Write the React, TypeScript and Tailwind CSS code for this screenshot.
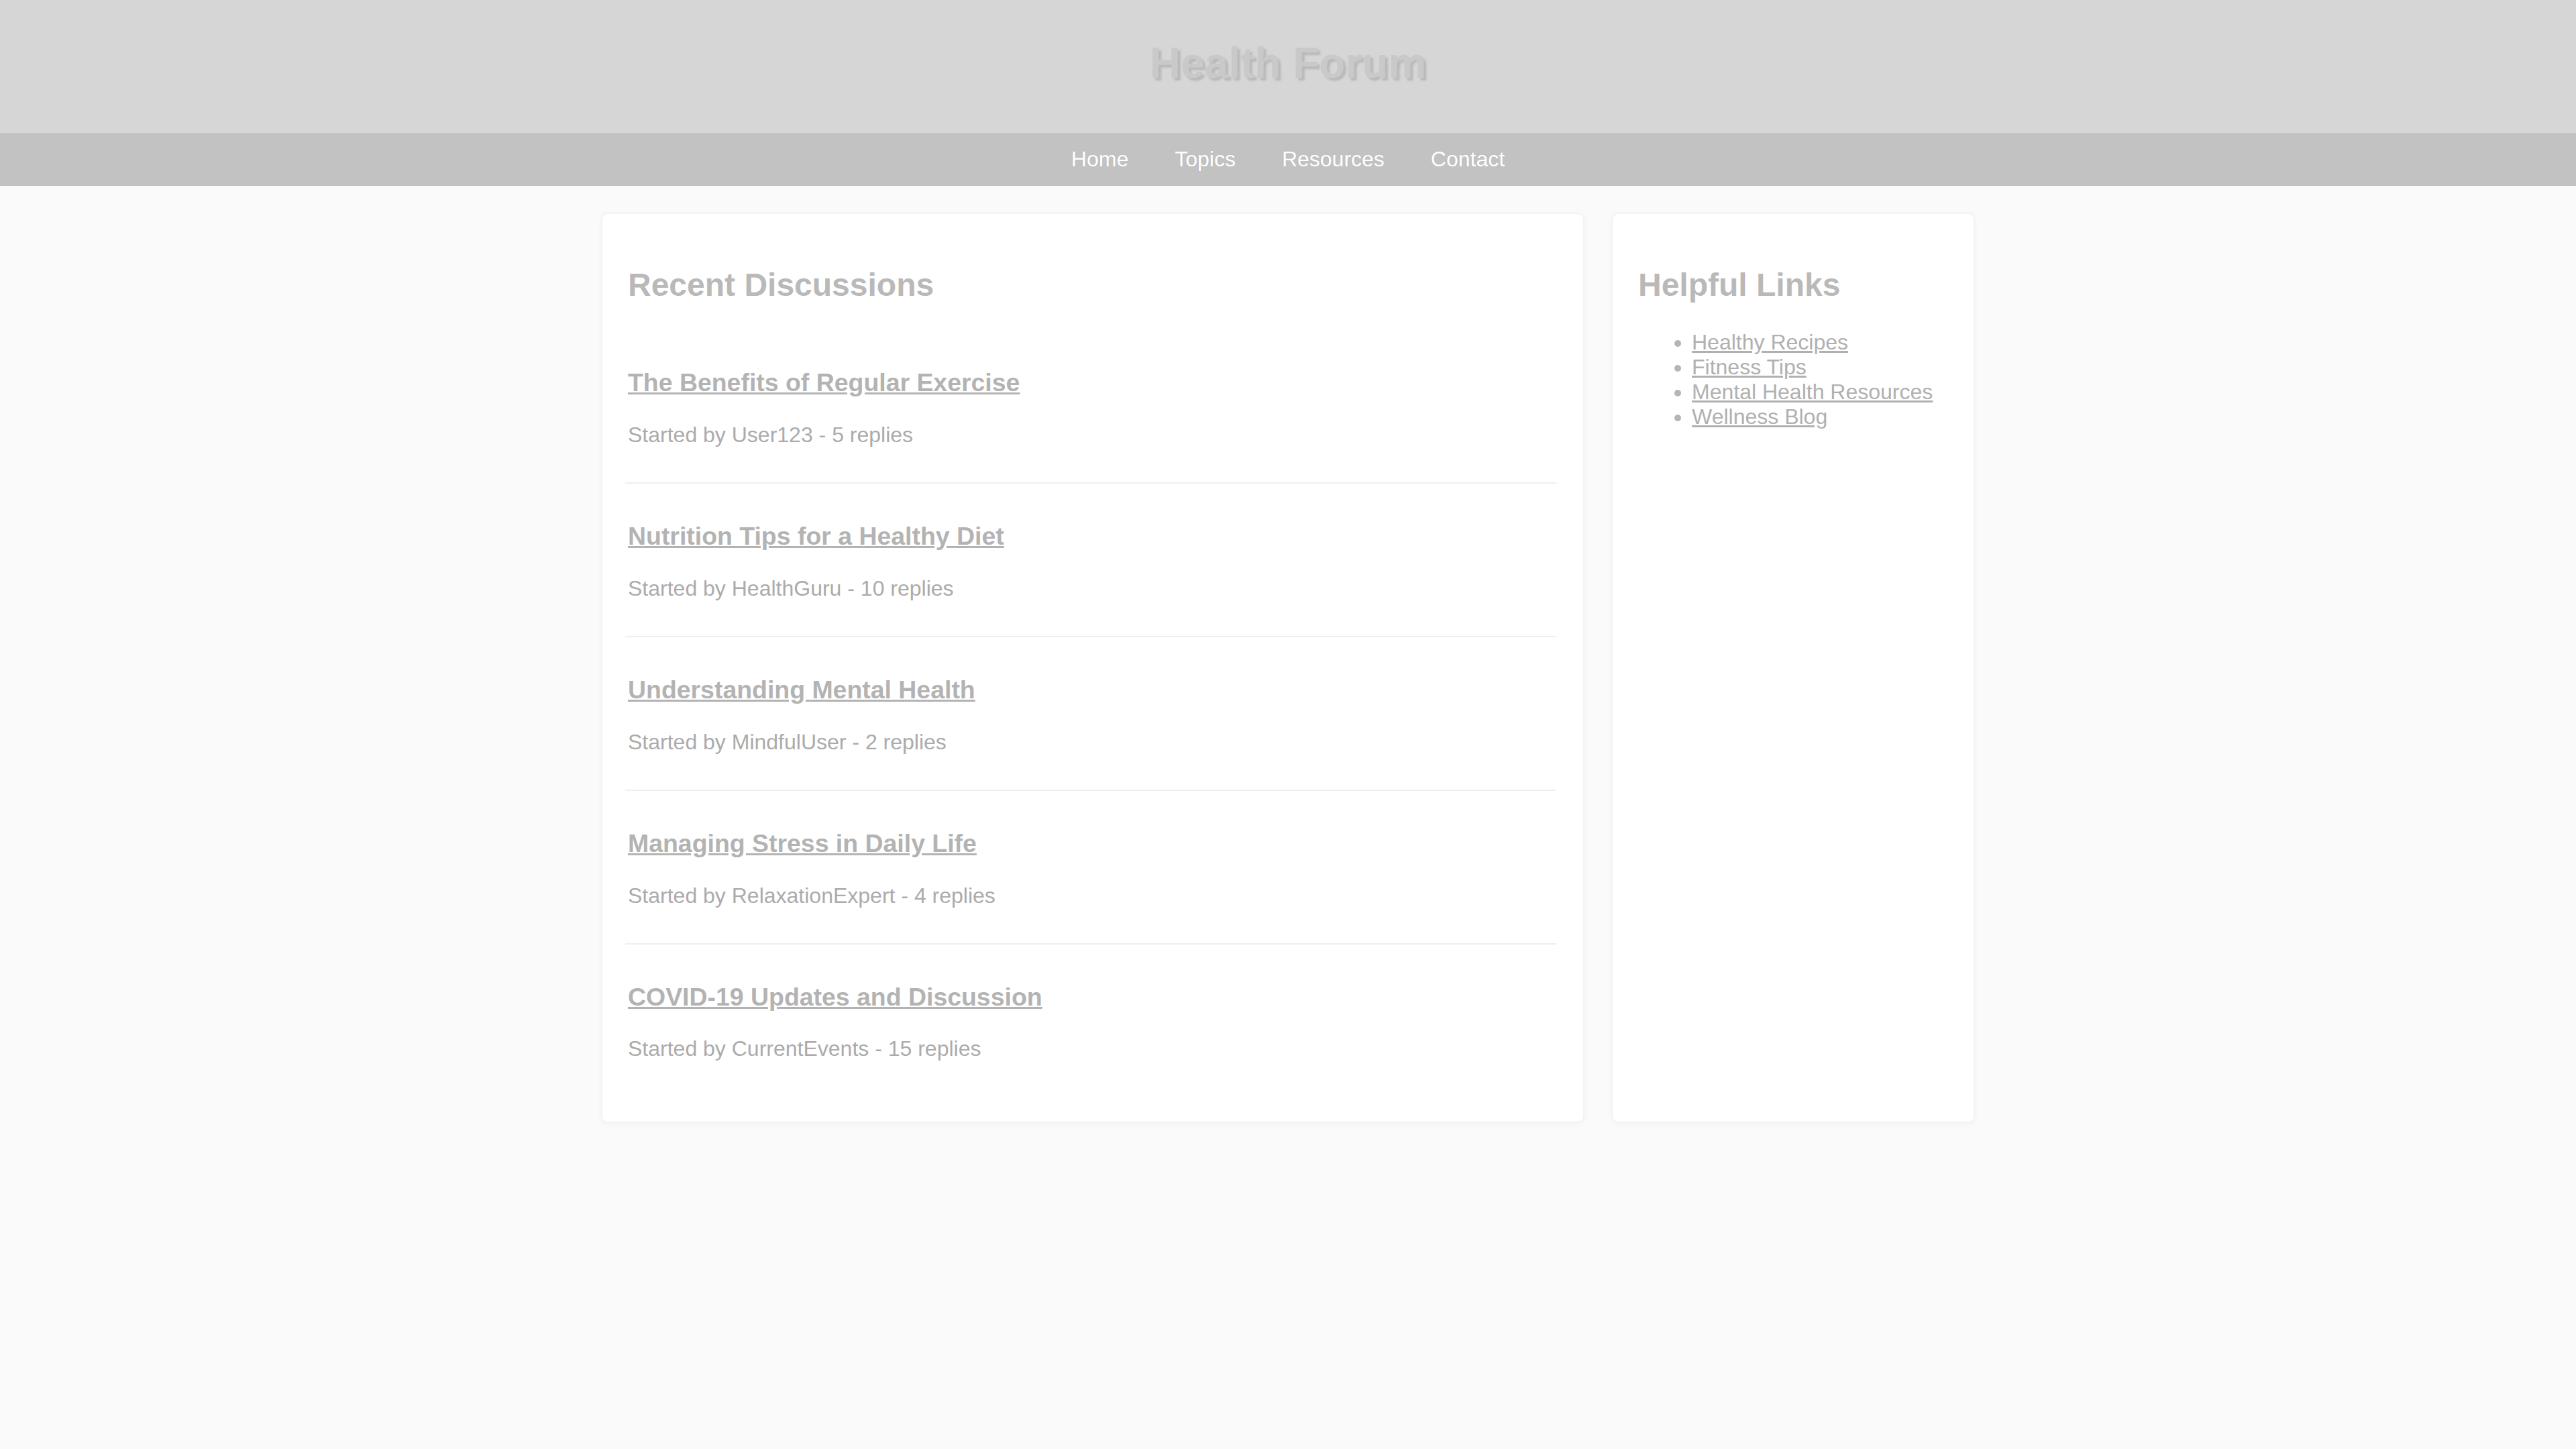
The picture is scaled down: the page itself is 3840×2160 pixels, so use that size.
import React from "react";

const discussions = [
  { title: "The Benefits of Regular Exercise", meta: "Started by User123 - 5 replies" },
  { title: "Nutrition Tips for a Healthy Diet", meta: "Started by HealthGuru - 10 replies" },
  { title: "Understanding Mental Health", meta: "Started by MindfulUser - 2 replies" },
  { title: "Managing Stress in Daily Life", meta: "Started by RelaxationExpert - 4 replies" },
  { title: "COVID-19 Updates and Discussion", meta: "Started by CurrentEvents - 15 replies" },
];

const links = ["Healthy Recipes", "Fitness Tips", "Mental Health Resources", "Wellness Blog"];

export default function App() {
  return (
    <div className="min-h-screen bg-[#fafafa] font-['Liberation_Sans',Arial,sans-serif] text-[32px] leading-[37px]">
      <header className="flex h-[198px] items-center justify-center bg-[#d6d6d6] pb-[10px]">
        <h1 className="text-[64px] font-bold leading-[74px] text-[#c9c9c9] [text-shadow:4px_4px_3px_#b9b9b9]">
          Health Forum
        </h1>
      </header>
      <nav className="flex h-[79px] items-center justify-center gap-[69px] bg-[#c2c2c2]">
        {["Home", "Topics", "Resources", "Contact"].map((l) => (
          <a key={l} href="#" className="text-[32px] leading-[37px] text-white [text-shadow:0_0_1px_#b0b0b0]">
            {l}
          </a>
        ))}
      </nav>
      <div className="mx-auto mt-[40px] flex w-[2048px] gap-[40px]">
        <main className="w-[1466px] rounded-[10px] border-2 border-[#f3f3f3] bg-white px-[38px] py-[38px] shadow-[0_2px_8px_rgba(0,0,0,0.03)]">
          <h2 className="mt-[40px] mb-[40px] text-[48px] font-bold leading-[55px] text-[#b9b9b9]">
            Recent Discussions
          </h2>
          {discussions.map((d, i) => (
            <div
              key={d.title}
              className={
                i === discussions.length - 1
                  ? "py-[20px]"
                  : "-ml-[4px] mr-[2px] border-b-2 border-[#efefef] py-[20px] pl-[4px]"
              }
            >
              <h3 className="mt-[37.44px] mb-[37.44px] text-[37.44px] font-bold leading-[43px]">
                <a href="#" className="text-[#b3b3b3] underline decoration-[#b3b3b3]">
                  {d.title}
                </a>
              </h3>
              <p className="mb-[32px] text-[32px] leading-[37px] text-[#ababab]">{d.meta}</p>
            </div>
          ))}
        </main>
        <aside className="w-[542px] rounded-[10px] border-2 border-[#f3f3f3] bg-white px-[38px] py-[38px] shadow-[0_2px_8px_rgba(0,0,0,0.03)]">
          <h2 className="mt-[40px] mb-[40px] text-[48px] font-bold leading-[55px] text-[#b9b9b9]">
            Helpful Links
          </h2>
          <ul className="list-disc pl-[80px] marker:text-[#b5b5b5]">
            {links.map((l) => (
              <li key={l} className="text-[32px] leading-[37px]">
                <a href="#" className="text-[#b0b0b0] underline decoration-[#b0b0b0]">
                  {l}
                </a>
              </li>
            ))}
          </ul>
        </aside>
      </div>
    </div>
  );
}
